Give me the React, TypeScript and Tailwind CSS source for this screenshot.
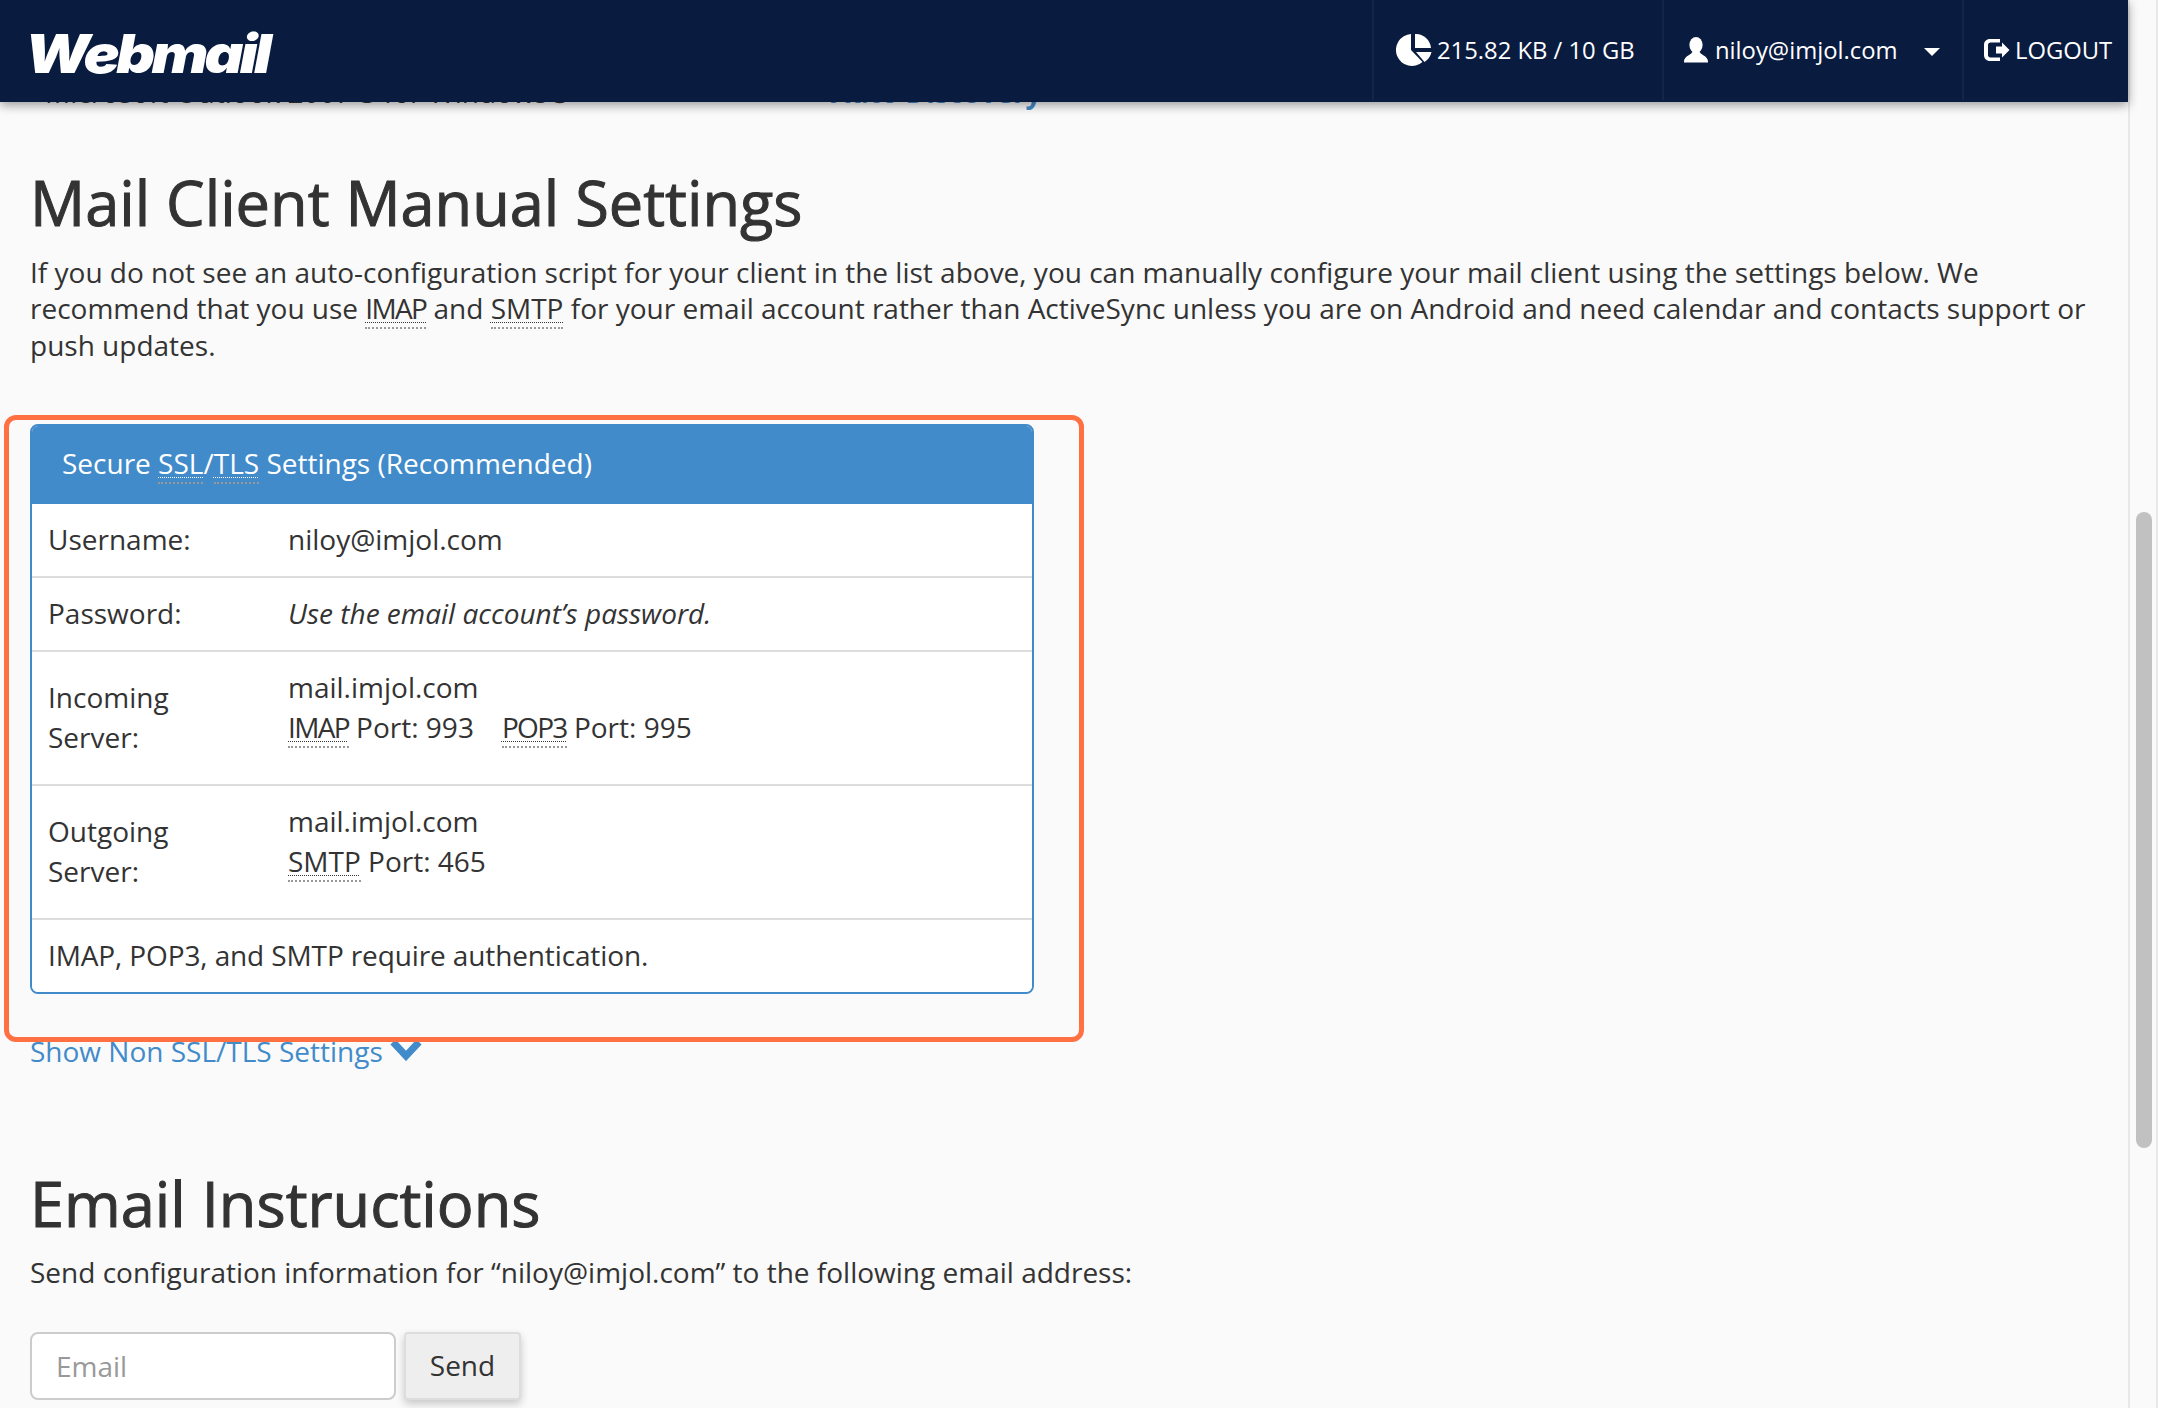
function Abbr({ children, light, tight }: { children: string; light?: boolean; tight?: boolean }) {
  return (
    <abbr
      title={children}
      className={`underline decoration-dotted decoration-1 underline-offset-[3px] border-b-2 border-dotted border-[#999] ${
        light ? "decoration-white" : "decoration-[#333]"
      } ${tight ? "tracking-[-0.06em]" : ""}`}
    >
      {children}
    </abbr>
  );
}

function PieIcon() {
  return (
    <svg viewBox="0 0 36 32" className="h-8 w-9 fill-white">
      <path d="M15 0 A16 16 0 1 0 26.5 28 L15 16 Z" />
      <path d="M19 0 A15.5 15.5 0 0 1 35 14 L19 14 Z" />
      <path d="M20 18 L35.5 18 A16 16 0 0 1 28.5 28 Z" />
    </svg>
  );
}

function UserIcon() {
  return (
    <svg viewBox="0 0 24 26" className="h-[26px] w-6 fill-white">
      <ellipse cx="12" cy="8" rx="6.6" ry="8" />
      <path d="M8.5 14 C8.5 18 0 18.5 0 24.5 L0 25.5 L24 25.5 L24 24.5 C24 18.5 15.5 18 15.5 14 Z" />
    </svg>
  );
}

function LogoutIcon() {
  return (
    <svg viewBox="0 0 26 22" className="h-[22px] w-[26px] fill-white">
      <path d="M16 0 H6 C2.5 0 0 2.5 0 6 V16 C0 19.5 2.5 22 6 22 H16 V18.5 H6.5 C5 18.5 4 17.5 4 16 V6 C4 4.5 5 3.5 6.5 3.5 H16 Z" />
      <path d="M12 7.5 H18 V3.5 L25.5 11 L18 18.5 V14.5 H12 Z" />
    </svg>
  );
}

function NavCell({ className, children }: { className: string; children: React.ReactNode }) {
  return (
    <div className={`flex h-[100px] items-center border-l-2 border-[#12254a] ${className}`}>{children}</div>
  );
}

function Row({
  label,
  last,
  children,
}: {
  label?: string;
  last?: boolean;
  children: React.ReactNode;
}) {
  return (
    <div
      className={`flex items-center bg-white px-4 pt-[15px] pb-[17px] ${last ? "" : "border-b-2 border-[#ddd]"}`}
    >
      {label && <div className="w-[240px] shrink-0 pr-[70px]">{label}</div>}
      <div>{children}</div>
    </div>
  );
}

export default function App() {
  return (
    <div className="relative flex h-[1408px] w-[2158px] overflow-hidden bg-[#fafafa] font-['Open_Sans',sans-serif] text-[28px] leading-[36.6px] text-[#333]">
      <div className="relative w-[2128px] shrink-0">
        <header className="absolute inset-x-0 top-0 z-10 flex h-[102px] items-start justify-between bg-[#091b3f] text-[23.8px] text-white shadow-[0_3px_10px_rgba(0,0,0,0.4)]">
          <div className="mt-[24px] ml-[25px] origin-left scale-x-[1.136] font-['Inter',sans-serif] text-[53px] leading-[60px] font-black tracking-[-0.06em] italic">
            Webmail
          </div>
          <div className="flex">
            <NavCell className="w-[290px] pl-[22px]">
              <PieIcon />
              <span className="ml-[5px]">215.82 KB / 10 GB</span>
            </NavCell>
            <NavCell className="w-[300px] pl-[20px]">
              <UserIcon />
              <span className="ml-[7px]">niloy@imjol.com</span>
              <span className="mt-1 ml-[26px] h-0 w-0 border-x-8 border-t-8 border-x-transparent border-t-white" />
            </NavCell>
            <NavCell className="w-[166px] pl-[20px]">
              <LogoutIcon />
              <span className="ml-[5px]">LOGOUT</span>
            </NavCell>
          </div>
        </header>

        <main className="pt-[74px] pl-[30px]">
          <div className="flex pl-[15px]">
            <span className="w-[786px]">Microsoft Outlook 2007-3 for Windows®</span>
            <span className="font-bold text-[#428bca]">Auto Discovery</span>
          </div>

          <h1 className="mt-[58px] text-[61.3px] leading-[66px] font-medium [-webkit-text-stroke:1px_#333]">
            Mail Client Manual Settings
          </h1>
          <p className="mt-[19px] w-[2070px]">
            If you do not see an auto-configuration script for your client in the list above, you can manually configure
            your mail client using the settings below. We recommend that you use <Abbr tight>IMAP</Abbr> and{" "}
            <Abbr>SMTP</Abbr> for your email account rather than ActiveSync unless you are on Android and need calendar
            and contacts support or push updates.
          </p>

          <div className="relative mt-[61px] w-[1004px]">
            <div className="pointer-events-none absolute -top-[9px] -right-[50px] -bottom-12 -left-[26px] z-10 rounded-xl border-[5px] border-[#ff7043]" />
            <div className="overflow-hidden rounded-lg border-2 border-[#428bca] leading-10">
              <div className="flex h-[78px] items-center bg-[#428bca] pb-[5px] pl-[30px] text-white">
                <span>
                  Secure <Abbr light>SSL</Abbr>/<Abbr light>TLS</Abbr> Settings (Recommended)
                </span>
              </div>
              <Row label="Username:">niloy@imjol.com</Row>
              <Row label="Password:">
                <em>Use the email account’s password.</em>
              </Row>
              <Row label="Incoming Server:">
                <div className="mb-5">
                  <div>mail.imjol.com</div>
                  <div>
                    <Abbr tight>IMAP</Abbr> Port: 993
                    <span className="ml-[28px]">
                      <Abbr tight>POP3</Abbr> Port: 995
                    </span>
                  </div>
                </div>
              </Row>
              <Row label="Outgoing Server:">
                <div className="mb-5">
                  <div>mail.imjol.com</div>
                  <div>
                    <Abbr>SMTP</Abbr> Port: 465
                  </div>
                </div>
              </Row>
              <Row last>
                <span className="tracking-[-0.12px]">IMAP, POP3, and SMTP require authentication.</span>
              </Row>
            </div>
          </div>

          <div className="mt-[39px] flex items-center text-[#428bca]">
            <span>Show Non SSL/TLS Settings</span>
            <svg viewBox="0 0 32 22" className="-mt-[4px] ml-[7px] h-[22px] w-8 fill-none stroke-[#428bca] stroke-[7]">
              <path d="M3 3 L16 17 L29 3" />
            </svg>
          </div>

          <h2 className="mt-[100px] text-[61.3px] leading-[66px] font-medium [-webkit-text-stroke:1px_#333]">
            Email Instructions
          </h2>
          <p className="mt-[18px]">Send configuration information for “niloy@imjol.com” to the following email address:</p>

          <div className="mt-[41px] flex gap-2">
            <input
              placeholder="Email"
              className="h-[68px] w-[366px] rounded-lg border-2 border-[#ccc] bg-white px-6 placeholder:text-[#999]"
            />
            <button className="h-[68px] w-[117px] rounded-sm border-2 border-[#ddd] bg-[#eee] text-[#333] shadow-[0_4px_8px_rgba(0,0,0,0.2)]">
              Send
            </button>
          </div>
        </main>
      </div>

      <aside className="w-[30px] border-x-2 border-x-[#e8e8e8] bg-[#fafafa] pt-[512px] pl-[6px]">
        <div className="h-[636px] w-4 rounded-full bg-[#c1c1c1]" />
      </aside>
    </div>
  );
}
